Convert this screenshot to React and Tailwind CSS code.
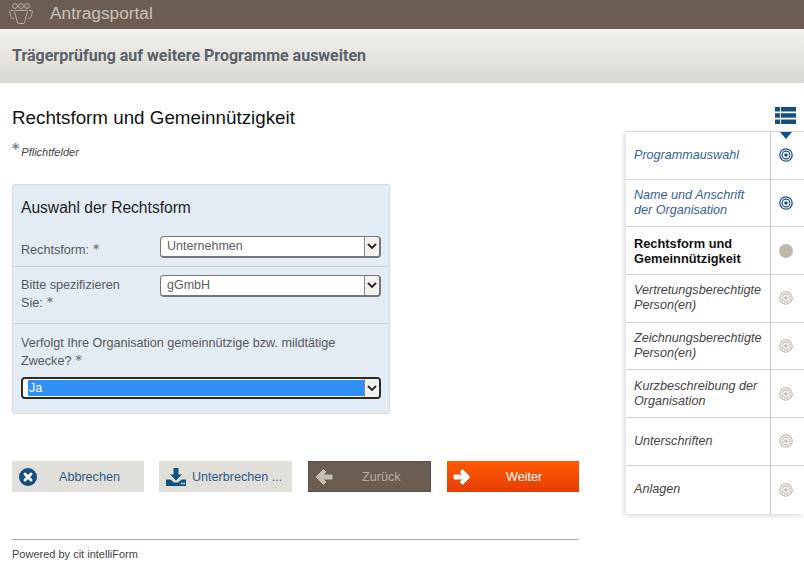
const STEPS = [
  { text: ['Programmauswahl'], state: 'done' },
  { text: ['Name und Anschrift', 'der Organisation'], state: 'done' },
  { text: ['Rechtsform und', 'Gemeinnützigkeit'], state: 'current' },
  { text: ['Vertretungsberechtigte', 'Person(en)'], state: 'open' },
  { text: ['Zeichnungsberechtigte', 'Person(en)'], state: 'open' },
  { text: ['Kurzbeschreibung der', 'Organisation'], state: 'open' },
  { text: ['Unterschriften'], state: 'open' },
  { text: ['Anlagen'], state: 'open' },
]

function Star() {
  return <span className="font-['DejaVu_Sans',sans-serif] font-bold text-[#767b80] text-[12px] leading-none ml-1 -mt-[3px]">*</span>
}

function Target({ color }) {
  return (
    <svg width="14" height="14" viewBox="0 0 14 14" fill="none">
      <circle cx="7" cy="7" r="6.2" stroke={color} strokeWidth="1.3" />
      <circle cx="7" cy="7" r="3.9" stroke={color} strokeWidth="1.2" />
      <circle cx="7" cy="7" r="1.8" fill={color} />
    </svg>
  )
}

function Logo() {
  return (
    <svg width="24" height="21" viewBox="0 0 24 21" fill="none" stroke="#b8afa5" strokeWidth="1">
      <circle cx="6" cy="3" r="2.400" />
      <circle cx="12" cy="3" r="2.400" />
      <circle cx="18" cy="3" r="2.400" />
      <path d="M4.500 7.500H1.500C.7 7.500.4 8 .6 8.800l1.400 5c.3 1.200 1.200 1.700 3 1.700" />
      <path d="M19.500 7.500h3c.8 0 1.100.5.900 1.300l-1.400 5c-.3 1.200-1.200 1.700-3 1.700" />
      <path d="M6.500 7.500h11c.8 0 1.100.5.900 1.300l-1.900 7.200c-.4 1.700-.9 4.500-1.900 4.500H9.400c-1 0-1.500-2.800-1.900-4.500L5.600 8.800c-.2-.8.1-1.300.9-1.300z" />
    </svg>
  )
}

function Select({ value, active }) {
  return (
    <div className={`h-[22px] flex items-stretch rounded-[4px] bg-white border overflow-hidden ${active ? 'border-[#2c2c2c] border-2' : 'border-[#77777a] border-r-2 border-b-2'}`}>
      <div className={`flex-1 flex items-center text-[12.500px] ${active ? 'bg-[#2f8ff5] text-white ml-[5px] my-[1px] pl-[1px]' : 'text-[#5c6063] pl-[6px]'}`}>
        {value}
      </div>
      <div className="w-[15px] flex items-center justify-center bg-[#f1f1ef] border-l border-[#8a8a8a]">
        <svg width="10" height="7" viewBox="0 0 10 7" fill="none" stroke="#222" strokeWidth="1.800">
          <path d="M1 1l4 4 4-4" />
        </svg>
      </div>
    </div>
  )
}

function GreyButton({ icon, label, className }) {
  return (
    <div className={`h-[31px] flex items-center bg-[#e0dfda] text-[12.600px] text-[#2c5a88] ${className}`}>
      {icon}
      {label}
    </div>
  )
}

export default function App() {
  return (
    <div className="w-[804px] h-[584px] overflow-hidden bg-white font-['Liberation_Sans',sans-serif]">
      <div className="h-[29px] bg-[#6b5d52] flex items-center pl-[9px] pb-[2px]">
        <Logo />
        <span className="ml-[17px] text-[17.300px] text-[#c9c2ba]">Antragsportal</span>
      </div>
      <div className="h-[54px] bg-gradient-to-b from-[#f3f1ef] to-[#d9d8d2] flex items-center pl-[12px] pb-[1px]">
        <span className="font-['Roboto',sans-serif] font-bold text-[16px] text-[#5a6167]">
          Trägerprüfung auf weitere Programme ausweiten
        </span>
      </div>

      <div className="flex">
        <div className="w-[567px] ml-[12px]">
          <h1 className="mt-[24px] text-[18.800px] leading-[22px] text-[#111]">Rechtsform und Gemeinnützigkeit</h1>
          <div className="mt-[11px] h-[20px] flex items-start">
            <span className="font-['DejaVu_Sans',sans-serif] font-bold text-[#767b80] text-[14px] leading-[16px]">*</span>
            <span className="ml-[2px] mt-[5px] italic text-[11px] leading-[14px] text-[#444]">Pflichtfelder</span>
          </div>

          <div className="mt-[24px] w-[378px] h-[230px] bg-[#e3ebf3] border border-[#d3d9de] rounded-[3px]">
            <div className="h-[81px] px-[8px] pt-[14px]">
              <div className="text-[15.600px] leading-[18px] text-[#222]">Auswahl der Rechtsform</div>
              <div className="mt-[19px] flex">
                <div className="w-[139px] pt-[5px] text-[12.600px] leading-[18px] text-[#55595c] flex items-center">
                  Rechtsform:<Star />
                </div>
                <div className="w-[221px]"><Select value="Unternehmen" /></div>
              </div>
            </div>
            <div className="h-[57px] border-t border-[#cdd2d6] px-[8px] pt-[8px] flex">
              <div className="w-[139px] pt-[1px] text-[12.600px] leading-[18px] text-[#55595c]">
                <div>Bitte spezifizieren</div>
                <div className="flex items-center">Sie:<Star /></div>
              </div>
              <div className="w-[221px]"><Select value="gGmbH" /></div>
            </div>
            <div className="border-t border-[#cdd2d6] px-[8px] pt-[11px]">
              <div className="text-[12.600px] leading-[17.500px] text-[#55595c]">Verfolgt Ihre Organisation gemeinnützige bzw. mildtätige</div>
              <div className="text-[12.600px] leading-[17.500px] text-[#55595c] flex items-center">Zwecke?<Star /></div>
              <div className="mt-[7px]"><Select value="Ja" active /></div>
            </div>
          </div>

          <div className="mt-[47px] flex gap-[15px]">
            <GreyButton
              className="w-[132px] pl-[7px]"
              label={<span className="ml-[22px] pt-[1px]">Abbrechen</span>}
              icon={
                <svg width="18" height="18" viewBox="0 0 18 18">
                  <circle cx="9" cy="9" r="9" fill="#14507f" />
                  <path d="M6 6l6 6M12 6l-6 6" stroke="#fff" strokeWidth="3" strokeLinecap="round" />
                </svg>
              }
            />
            <GreyButton
              className="w-[133px] pl-[7px] whitespace-nowrap"
              label={<span className="ml-[6px] pt-[1px]">Unterbrechen ...</span>}
              icon={
                <svg width="20" height="18" viewBox="0 0 20 18">
                  <path d="M7.500 0h5v6.500H16L10 12.500 4 6.500h3.500z" fill="#14507f" />
                  <path d="M0 11.500h4.500L8 14.500h4l3.500-3H20V18H0z" fill="#14507f" />
                  <circle cx="15.500" cy="15.500" r="1" fill="#e0dfda" />
                  <circle cx="18" cy="15.500" r="1" fill="#e0dfda" />
                </svg>
              }
            />
            <div className="ml-[1px] w-[123px] h-[31px] flex items-center bg-[#6b5d52] border border-[#5a4e45] text-[12.600px] text-[#b5ada4] pl-[6px]">
              <svg width="18" height="18" viewBox="0 0 18 18">
                <path d="M8.500 1.500L1 9l7.500 7.500 2.500-2.500-3-3h9V7H8l3-3z" fill="#c5bcb2" stroke="#c5bcb2" strokeLinejoin="round" />
              </svg>
              <span className="ml-[29px] pt-[1px]">Zurück</span>
            </div>
            <div className="ml-[1px] w-[132px] h-[31px] flex items-center bg-gradient-to-b from-[#ff5a00] to-[#e63c04] text-[12.600px] text-white pl-[6px]">
              <svg width="18" height="18" viewBox="0 0 18 18">
                <path d="M9.500 1.500L17 9l-7.500 7.500L7 14l3-3H1V7h9L7 4z" fill="#fff" stroke="#fff" strokeLinejoin="round" />
              </svg>
              <span className="ml-[35px] pt-[1px]">Weiter</span>
            </div>
          </div>

          <div className="mt-[47px] border-t border-[#a9a9a9] pt-[7px] text-[11px] leading-[14px] text-[#444]">
            Powered by cit intelliForm
          </div>
        </div>

        <div className="ml-[47px] w-[178px]">
          <div className="h-[48px] flex justify-end pt-[24px] pr-[8px]">
            <svg width="21" height="17" viewBox="0 0 21 17" fill="#14507f">
              <rect x="0" y="0" width="5" height="4.500" />
              <rect x="6" y="0" width="15" height="4.500" />
              <rect x="0" y="6.200" width="5" height="4.500" />
              <rect x="6" y="6.200" width="15" height="4.500" />
              <rect x="0" y="12.500" width="5" height="4.500" />
              <rect x="6" y="12.500" width="15" height="4.500" />
            </svg>
          </div>
          <div className="relative border-t border-[#d5d5d5] shadow-[-2px_2px_5px_rgba(0,0,0,0.15)]">
            <svg className="absolute top-0 right-[12px]" width="12" height="7" viewBox="0 0 12 7" fill="#14507f">
              <path d="M0 0h12L6 7z" />
            </svg>
            {STEPS.map((step, i) => (
              <div key={i} className={`h-[47.700px] flex ${i < STEPS.length - 1 ? 'border-b border-[#d5d5d5]' : ''}`}>
                <div className={`w-[144px] pl-[8px] flex flex-col justify-center leading-[15px] ${
                  step.state === 'current' ? 'text-[12.800px] font-bold text-[#111]' : step.state === 'done' ? 'text-[12.600px] italic text-[#3a5f95]' : 'text-[12.600px] italic text-[#444]'
                }`}>
                  {step.text.map(t => <div key={t}>{t}</div>)}
                </div>
                <div className="flex-1 border-l border-[#cfcbc6] pr-[4px] flex items-center justify-center">
                  {step.state === 'done' && <Target color="#1c4f8f" />}
                  {step.state === 'open' && <Target color="#c4bbb2" />}
                  {step.state === 'current' && <span className="w-[14px] h-[14px] rounded-full bg-[#bfb6ad]" />}
                </div>
              </div>
            ))}
          </div>
        </div>
      </div>
    </div>
  )
}
